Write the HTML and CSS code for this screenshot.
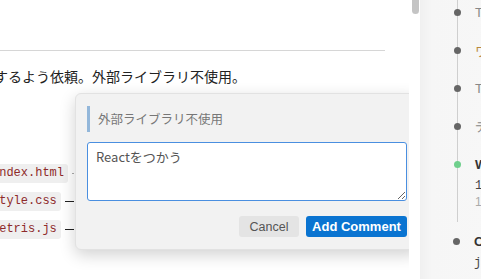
FILE: index.html
```html
<!DOCTYPE html>
<html lang="ja">
<head>
    <meta charset="UTF-8">
    <title>Review</title>
    <link rel="stylesheet" href="styles.css">
</head>
<body>
    <div class="layout">
        <div class="content">
            <div class="doc">
                <hr class="divider">
                <p class="summary">するよう依頼。外部ライブラリ不使用。</p>
                <div class="files">
                    <div class="file-row"><code class="chip">index.html</code><span class="link link-short"></span></div>
                    <div class="file-row"><code class="chip">style.css</code><span class="link"></span></div>
                    <div class="file-row"><code class="chip">tetris.js</code><span class="link"></span></div>
                </div>
            </div>

            <div class="comment-box">
                <blockquote class="quote">外部ライブラリ不使用</blockquote>
                <textarea class="comment-input">Reactをつかう</textarea>
                <div class="actions">
                    <button class="btn btn-cancel">Cancel</button>
                    <button class="btn btn-primary">Add Comment</button>
                </div>
            </div>
        </div>

        <div class="scrollbar"><div class="thumb"></div></div>

        <aside class="sidebar">
            <ul class="timeline">
                <li class="item"><span class="title muted">T</span></li>
                <li class="item"><span class="title orange">ワ</span></li>
                <li class="item"><span class="title muted">T</span></li>
                <li class="item"><span class="title muted">テ</span></li>
                <li class="item active">
                    <span class="title strong">W</span>
                    <span class="meta mono">1</span>
                    <span class="meta light">1</span>
                </li>
            </ul>
            <ul class="timeline timeline-end">
                <li class="item">
                    <span class="title strong">C</span>
                    <span class="meta mono">j</span>
                </li>
            </ul>
        </aside>
    </div>
</body>
</html>
```

FILE: styles.css
```css
* {
    margin: 0;
    padding: 0;
    box-sizing: border-box;
}

body {
    font-family: "Noto Sans CJK JP", "Noto Sans", sans-serif;
    background: #fff;
    color: #222;
    overflow: hidden;
}

.layout {
    display: flex;
    height: 279px;
}

.content {
    position: relative;
    width: 409px;
    flex: none;
    overflow: hidden;
}

.doc {
    padding-top: 50px;
    margin-left: -6px;
    width: 391px;
}

.divider {
    border: none;
    border-top: 1px solid #d6d6d6;
}

.summary {
    font-size: 14px;
    line-height: 20px;
    margin-top: 15px;
    white-space: nowrap;
}

.files {
    margin-top: 78px;
    display: flex;
    flex-direction: column;
    gap: 9px;
    margin-left: -6px;
    width: 86px;
}

.file-row {
    display: flex;
    align-items: center;
    height: 19px;
}

.chip {
    font-family: "Liberation Mono", monospace;
    font-size: 12px;
    line-height: 19px;
    color: #8e2a2a;
    background: #efefef;
    border-radius: 3px;
    padding: 0 4px;
}

.link {
    flex: 1;
    margin-left: 4px;
    border-top: 1px solid #222;
}

.link-short {
    border-top-color: #aaa;
}

.comment-box {
    position: absolute;
    left: 75px;
    top: 93px;
    width: 344px;
    height: 157px;
    background: #f2f2f2;
    border: 1px solid #e2e2e2;
    border-radius: 6px;
    box-shadow: 0 5px 16px rgba(0, 0, 0, 0.18);
    padding: 12px 11px;
}

.quote {
    border-left: 3px solid #93b7da;
    padding-left: 8px;
    height: 26px;
    line-height: 26px;
    font-size: 12.5px;
    color: #777;
}

.comment-input {
    display: block;
    width: 100%;
    height: 59px;
    margin-top: 10px;
    padding: 5px 8px;
    border: 1px solid #4a8fe0;
    border-radius: 3px;
    background: #fff;
    font-family: "Noto Sans CJK JP", "Noto Sans", sans-serif;
    font-size: 13px;
    line-height: 18px;
    color: #555;
    resize: vertical;
    outline: none;
}

.actions {
    display: flex;
    justify-content: flex-end;
    gap: 7px;
    margin-top: 15px;
}

.btn {
    height: 21px;
    border: none;
    border-radius: 3px;
    font-family: "Liberation Sans", Arial, sans-serif;
    font-size: 12.5px;
}

.btn-cancel {
    width: 60px;
    background: #e4e4e4;
    color: #555;
}

.btn-primary {
    width: 101px;
    background: #0a74d1;
    color: #fff;
    font-weight: bold;
    font-size: 13px;
}

.scrollbar {
    width: 11px;
    flex: none;
    padding-left: 3px;
    padding-right: 1px;
}

.thumb {
    width: 7px;
    height: 14px;
    background: #c4c4c4;
    border-radius: 0 0 4px 4px;
}

.sidebar {
    flex: 1;
    background: linear-gradient(90deg, #f0f0f0 0%, #f6f6f6 12px, #f7f7f7 100%);
}

.timeline {
    list-style: none;
    margin-left: 37px;
    border-left: 1px solid #cfcfcf;
    height: 222px;
}

.timeline-end {
    border-left: none;
    height: auto;
    margin-top: 12px;
}

.item {
    position: relative;
    padding-left: 17px;
    display: flex;
    flex-direction: column;
    height: 38px;
    padding-top: 5px;
}

.timeline-end .item {
    padding-top: 0;
}

.item::before {
    content: "";
    position: absolute;
    left: -4px;
    top: 9px;
    width: 7px;
    height: 7px;
    border-radius: 50%;
    background: #666;
}

.timeline-end .item::before {
    top: 4px;
}

.item.active::before {
    background: #6fcf8c;
}

.title {
    font-size: 13px;
    line-height: 16px;
    white-space: nowrap;
}

.muted {
    color: #888;
    font-family: "Liberation Sans", Arial, sans-serif;
}

.orange {
    color: #b8893f;
}

.strong {
    font-family: "Liberation Sans", Arial, sans-serif;
    font-weight: bold;
    color: #333;
}

.meta {
    font-size: 12px;
    line-height: 17px;
    margin-top: 5px;
}

.mono {
    font-family: "Liberation Mono", monospace;
    color: #444;
}

.light {
    color: #aaa;
    font-family: "Liberation Sans", Arial, sans-serif;
    margin-top: -1px;
}
```
